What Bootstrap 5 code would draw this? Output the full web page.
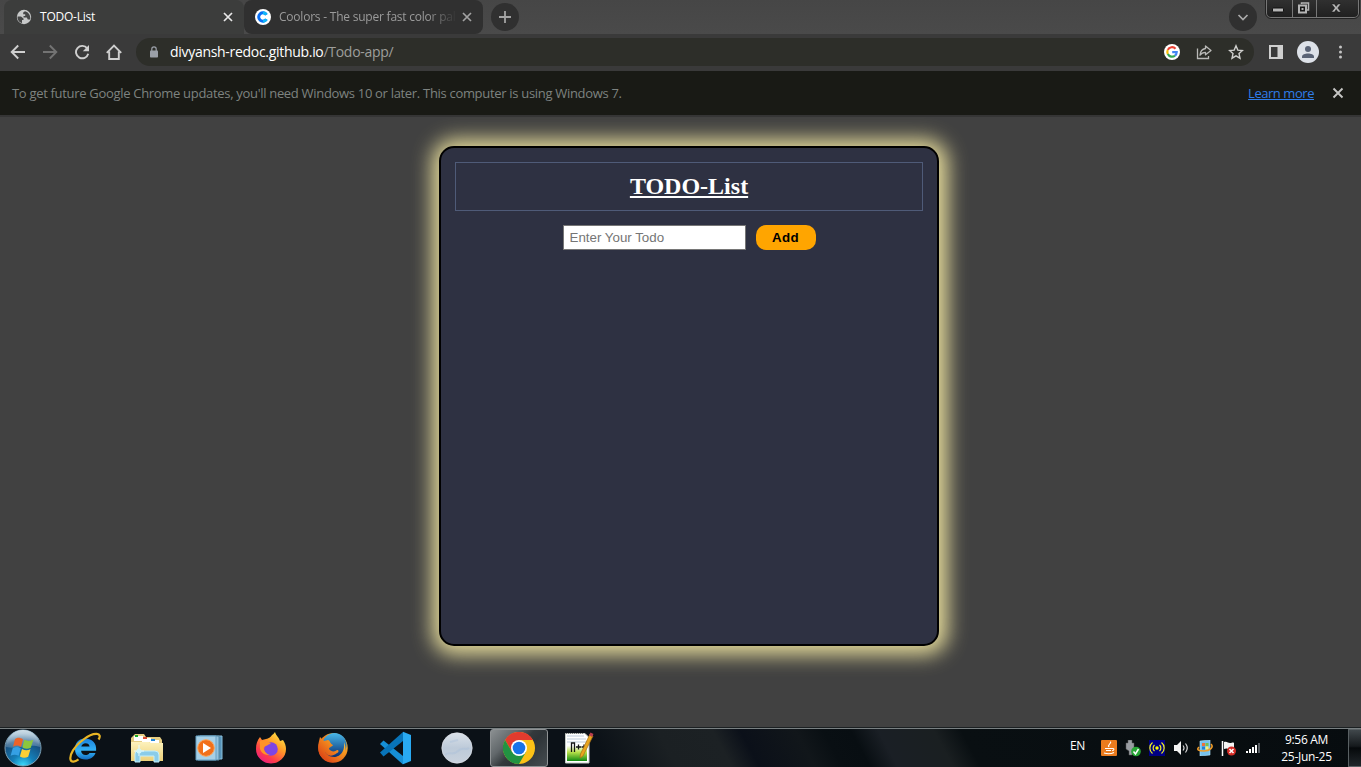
<!DOCTYPE html>
<html lang="en">
<head>
<meta charset="utf-8">
<title>TODO-List</title>
<link href="https://cdn.jsdelivr.net/npm/bootstrap@5.3.0/dist/css/bootstrap.min.css" rel="stylesheet">
<style>
body{width:1361px;height:767px;overflow:hidden;background:#414141;font-family:"Open Sans","Noto Sans",sans-serif;font-size:12px;line-height:16px}
svg{display:block;flex:none}
.titlebar{height:34px;background:linear-gradient(#464646,#4a4a4a);padding-left:4px}
.tab{width:240px;height:34px;border-radius:8px 8px 0 0;padding:0 9px 0 12px;color:#fff}
.tab.current{background:#3c3d3c}
.tab.other{width:239px;background:#303030;color:#9b9b9b;border-radius:8px;padding-left:11px}
.tab-title{flex:1;margin-left:8px;white-space:nowrap;letter-spacing:-.22px}
.other .tab-title{-webkit-mask-image:linear-gradient(90deg,#000 148px,transparent 178px);letter-spacing:-.22px}
.round-btn{width:28px;height:28px;margin-top:3px;background:#303030}
.winbtns{width:93px;height:18px;margin:0 2px 0 9px;border:1px solid #777;border-top:0;border-radius:0 0 5px 5px;background:linear-gradient(#303030,#202020);outline:1px solid #222}
.winbtns>div{width:24px;height:100%;border-left:1px solid #777}
.winbtns>div:first-child{width:25px;border:0}
.winbtns>div:last-child{width:42px}
.toolbar{height:37px;background:#3a3a3a;padding:0 0 1px 2px}
.slot{width:32px;flex:none;display:flex;justify-content:center;align-items:center}
.omnibox{height:28px;margin-left:6px;margin-right:6px;width:1118px;background:#2d2e29;padding-left:2px;padding-right:2px;font-size:14px;color:#9d9e9b}
.omnibox .url{letter-spacing:-.3px}
.infobar{height:44px;background:#191a15;color:#7e8380;padding:0 16px 0 12px;font-size:13px}
.infobar .msg{letter-spacing:-.31px}
.infobar a{color:#2f7de9;letter-spacing:-.45px;margin-right:17px}
.viewport{height:613px;background:#414141;border-top:2px solid #353535;padding:29px 0 0 439px}
.todo{width:500px;height:500px;background:#2e3142;border:2px solid #000;border-radius:15px;padding:14px;box-shadow:1px 1px 20px 8px #e3d999}
.todo h1{height:49px;border:1px solid #4f5b78;margin:0 0 14px;color:#fff;font:bold 24px/47px "Liberation Serif",serif;text-decoration:underline;text-align:center}
.todo input{width:183px;height:25px;border:1px solid #767676;border-radius:0;padding:1px 5px 1px 6px;font:13.33px "Liberation Sans",sans-serif;background:#fff}
.todo input::placeholder{color:#757575;opacity:1}
.todo button{width:60px;height:25px;border:0;border-radius:10px;background:orange;font:bold 13.33px "Liberation Sans",sans-serif;letter-spacing:.4px;padding:0;color:#000}
.taskbar{height:39px;border-top:1px solid #798082;box-shadow:0 -1px #1b2022;position:relative;background:linear-gradient(62deg,#0b1117 0,#0b1117 44%,#1b2023 49%,#1c2124 53%,#0b1019 55%,#11161a 59%,#090f13 61%,#080e12 63%,#1a1f25 65%,#1a1f21 69%,#090f12 71%,#070c0f 100%)}
.task{width:62px;height:38px;flex:none;display:flex;align-items:center;justify-content:center}
.task.running{width:58px;margin:0 2px;border:1px solid #8e9294;border-radius:3px;background:linear-gradient(135deg,#8b9092 0,#62686b 30%,#33393c 48%,#2e3438 60%,#454c50 100%)}
.tray{color:#fff}
.tray .ic{width:24px;display:flex;justify-content:center}
.tray .lang{letter-spacing:-.4px;width:27px;margin-bottom:5px}
.clock{width:83px;text-align:center;line-height:17px;letter-spacing:-.3px}
.desk{width:13px;height:38px;border:1px solid #596063;border-right:0;background:linear-gradient(#40474b,#15191c 45%,#06090b 50%,#20262a)}
</style>
</head>
<body>
<svg width="0" height="0" class="position-absolute">
<defs>
<radialGradient id="orb" cx=".5" cy="1" r=".9"><stop offset="0" stop-color="#3ee0ff"/><stop offset=".35" stop-color="#147fb8"/><stop offset=".8" stop-color="#174c7c"/><stop offset="1" stop-color="#6c93b0"/></radialGradient>
<linearGradient id="gloss" x2="0" y2="1"><stop offset="0" stop-color="#e2edf3" stop-opacity=".85"/><stop offset="1" stop-color="#b4d0e2" stop-opacity=".25"/></linearGradient>
<linearGradient id="ie" x2="0" y2="1"><stop offset="0" stop-color="#1b81dc"/><stop offset=".6" stop-color="#35b4f6"/><stop offset="1" stop-color="#126bc0"/></linearGradient>
<linearGradient id="fold" x2="0" y2="1"><stop offset="0" stop-color="#fdf2bd"/><stop offset="1" stop-color="#ecd079"/></linearGradient>
<linearGradient id="fx" x1=".9" y1="0" x2=".2" y2="1"><stop offset="0" stop-color="#fff44f"/><stop offset=".4" stop-color="#ff9d26"/><stop offset=".75" stop-color="#ff3c4a"/><stop offset="1" stop-color="#e81889"/></linearGradient>
<linearGradient id="globe" x2="0" y2="1"><stop offset="0" stop-color="#49b8e9"/><stop offset="1" stop-color="#082d72"/></linearGradient>
<linearGradient id="fx2" x1="1" y1="0" x2=".2" y2=".8"><stop offset="0" stop-color="#ffe96a"/><stop offset=".4" stop-color="#f69a20"/><stop offset="1" stop-color="#df4d17"/></linearGradient>
<linearGradient id="moon" x2="0" y2="1"><stop offset="0" stop-color="#dae1e9"/><stop offset=".5" stop-color="#bdcad9"/><stop offset="1" stop-color="#c9d2dd"/></linearGradient>
<linearGradient id="npp" x2="0" y2="1"><stop offset=".3" stop-color="#fff"/><stop offset=".6" stop-color="#b9e24a"/><stop offset="1" stop-color="#128a12"/></linearGradient>
</defs>
</svg>

<header>
 <div class="titlebar d-flex">
  <div class="tab current d-flex align-items-center">
   <svg width="16" height="16" viewBox="0 0 16 16"><circle cx="8" cy="8" r="7.200" fill="#c7c9c9"/><path d="M1.500 7.500h3.500l2.500 2v1.500H6v3C3.500 13.500 1.300 11 1.500 7.500zM9 2.200L7.200 3.500v1.800h2V7H7.500v1.500h3.300l1 2h2.400C15 6.500 12.500 3 9 2.200z" fill="#454646"/></svg>
   <span class="tab-title">TODO-List</span>
   <svg width="14" height="14" viewBox="0 0 14 14"><path d="M3 3l8 8M11 3l-8 8" stroke="#e8e8e8" stroke-width="1.700"/></svg>
  </div>
  <div class="tab other d-flex align-items-center">
   <svg width="16" height="16" viewBox="0 0 16 16"><circle cx="8" cy="8" r="8" fill="#fff"/><path d="M11.400 5.700A4.200 4.200 0 1 0 11.400 10.300" fill="none" stroke="#0a70f5" stroke-width="3"/><path d="M8 3.800a4.200 4.200 0 0 1 3.400 1.900M8 12.200a4.200 4.200 0 0 0 3.400-1.900" fill="none" stroke="#10b8f8" stroke-width="3"/></svg>
   <span class="tab-title">Coolors - The super fast color pal</span>
   <svg width="14" height="14" viewBox="0 0 14 14"><path d="M3 3l8 8M11 3l-8 8" stroke="#a2a2a2" stroke-width="1.700"/></svg>
  </div>
  <div class="round-btn rounded-circle ms-2 p-2"><svg width="12" height="12" viewBox="0 0 12 12"><path d="M6 0v12M0 6h12" stroke="#a3a3a3" stroke-width="1.800"/></svg></div>
  <div class="round-btn rounded-circle ms-auto p-2"><svg width="12" height="12" viewBox="0 0 12 12"><path d="M1.500 4L6 8.500 10.500 4" fill="none" stroke="#aaa" stroke-width="1.700"/></svg></div>
  <div class="winbtns d-flex">
   <div><svg width="24" height="17"><rect x="5.500" y="8" width="11" height="4" rx="1" fill="#b5b5b5" stroke="#111"/></svg></div>
   <div><svg width="23" height="17"><path d="M8.500 4V3h7v7h-2" fill="none" stroke="#b5b5b5" stroke-width="1.500"/><rect x="6" y="5.500" width="7" height="7" fill="#191919" stroke="#b5b5b5" stroke-width="2"/><path d="M8.500 9h2" stroke="#b5b5b5" stroke-width="2"/></svg></div>
   <div><svg width="40" height="17"><path d="M14.500 4h3l1.700 2.400L21 4h3l-3.200 4 3.200 4h-3l-1.800-2.400-1.700 2.400h-3l3.200-4z" fill="#b5b5b5" stroke="#111" stroke-width=".5"/></svg></div>
  </div>
 </div>

 <div class="toolbar d-flex align-items-center">
  <span class="slot"><svg width="16" height="16" viewBox="0 0 16 16"><path d="M15 8H2M8.200 1.500L1.700 8l6.500 6.500" fill="none" stroke="#cfcfcf" stroke-width="1.900"/></svg></span>
  <span class="slot"><svg width="16" height="16" viewBox="0 0 16 16"><path d="M1 8h13M7.800 1.500L14.300 8l-6.500 6.500" fill="none" stroke="#737373" stroke-width="1.900"/></svg></span>
  <span class="slot"><svg width="16" height="16" viewBox="0 0 16 16"><path d="M13.200 4.400A6.200 6.200 0 1 0 14.200 9.700" fill="none" stroke="#cfcfcf" stroke-width="1.900"/><path d="M15 1v6.200H8.800z" fill="#cfcfcf"/></svg></span>
  <span class="slot"><svg width="16" height="16" viewBox="0 0 16 16"><path d="M.8 8.800L8 1.500l7.200 7.300M3.200 7.500V15h9.600V7.500" fill="none" stroke="#cfcfcf" stroke-width="1.900"/></svg></span>
  <div class="omnibox rounded-pill d-flex align-items-center">
   <span class="slot"><svg width="10" height="12" viewBox="0 0 10 12"><rect x="1" y="4.500" width="8" height="7" rx=".8" fill="#9ba0a8"/><path d="M2.800 5V3a2.200 2.200 0 0 1 4.400 0v2" fill="none" stroke="#9ba0a8" stroke-width="1.200"/></svg></span>
   <span class="url"><span class="text-white">divyansh-redoc.github.io</span>/Todo-app/</span>
   <span class="slot ms-auto"><svg width="16" height="16" viewBox="0 0 16 16"><circle cx="8" cy="8" r="8" fill="#fff"/><g fill="none" stroke-width="2.200"><path d="M11.500 4.700A4.700 4.700 0 0 0 3.800 5.900" stroke="#ea4335"/><path d="M3.800 5.900a4.700 4.700 0 0 0 0 4.200" stroke="#fbbc05"/><path d="M3.800 10.100a4.700 4.700 0 0 0 7.200 1.500" stroke="#34a853"/><path d="M11 11.600A4.700 4.700 0 0 0 12.700 8.200H8.200" stroke="#4285f4"/></g></svg></span>
   <span class="slot"><svg width="16" height="16" viewBox="0 0 16 16"><path d="M1.500 4.500v10h11V12" fill="none" stroke="#b9b9b7" stroke-width="1.300"/><path d="M9.500 2l5.500 4.500-5.500 4.300V8.300C7 8.300 5.300 9.200 4 11.200 4.300 7.500 6.200 5 9.500 4.500z" fill="none" stroke="#b9b9b7" stroke-width="1.300" stroke-linejoin="round"/></svg></span>
   <span class="slot"><svg width="16" height="16" viewBox="0 0 16 16"><path d="M8 1.800l1.800 4.300 4.700.4-3.500 3.100 1 4.600-4-2.400-4 2.400 1-4.600L1.500 6.500l4.700-.4z" fill="none" stroke="#cfcfcd" stroke-width="1.400"/></svg></span>
  </div>
  <span class="slot"><svg width="14" height="14" viewBox="0 0 14 14"><path d="M0 0h14v14H0zM2 2v10h6.500V2z" fill="#cfcfcf" fill-rule="evenodd"/></svg></span>
  <span class="slot"><svg width="22" height="22" viewBox="0 0 22 22"><circle cx="11" cy="11" r="11" fill="#dde1e8"/><circle cx="11" cy="8" r="3" fill="#596275"/><path d="M5 17v-1.300c0-4.200 12-4.200 12 0V17z" fill="#596275"/></svg></span>
  <span class="slot"><svg width="4" height="14" viewBox="0 0 4 14" fill="#c5c5c5"><circle cx="2.500" cy="2" r="1.500"/><circle cx="2.500" cy="7" r="1.500"/><circle cx="2.500" cy="12" r="1.500"/></svg></span>
 </div>

 <div class="infobar d-flex align-items-center">
  <span class="msg">To get future Google Chrome updates, you'll need Windows 10 or later. This computer is using Windows 7.</span>
  <a class="ms-auto" href="#">Learn more</a>
  <svg width="14" height="14" viewBox="0 0 14 14"><path d="M2.500 2.500l9 9M11.500 2.500l-9 9" stroke="#c6c6c4" stroke-width="1.900"/></svg>
 </div>
</header>

<main class="viewport">
 <div class="todo">
  <h1>TODO-List</h1>
  <div class="d-flex justify-content-center" style="gap:10px"><input type="text" placeholder="Enter Your Todo"><button>Add</button></div>
 </div>
</main>

<footer class="taskbar d-flex align-items-center">
 <div class="d-flex align-items-center ps-1" style="width:54px"><svg width="38" height="38" viewBox="0 0 38 38"><circle cx="19" cy="19" r="18" fill="url(#orb)" stroke="#7da0b4"/><path d="M2 18a17 17 0 0 1 34 0C25 14 14 21 2 18z" fill="url(#gloss)"/><path d="M11 10c3-2 5-1.500 8 .2l-2 7.800c-3-1.800-5-1.800-8-.3z" fill="#ed6328"/><path d="M20.300 10.800c3 1.500 6 1.500 9 0l-2.500 8c-3 1.500-5.500 1.200-8.400-.3z" fill="#8cc63e"/><path d="M8.800 19c3-1.500 5-1.500 8 .2l-2.200 7.600c-3-1.600-5-1.500-8 0z" fill="#35a0e4"/><path d="M18 20c3 1.500 5.500 1.600 8.500.2l-2.300 7.600c-3 1.500-5.400 1.300-8.300-.2z" fill="#fdcf35"/></svg></div>
 <div class="task"><svg width="32" height="34" viewBox="0 0 32 34"><path d="M16 7.500C9.500 7.500 6 12 6 18s4 10.500 10.500 10.500c5 0 8.500-2.500 10-6.500h-6c-.8 1.500-2 2-4 2-2.500 0-4.300-1.700-4.400-4.200h15C28 12.500 23.500 7.500 16 7.500zM12.300 15.500c.5-2 2-3.300 4.300-3.300s3.700 1.200 4 3.300z" fill="url(#ie)" fill-rule="evenodd"/><path d="M29.500 8.500C34 2 25.500 0 14.500 8.500 4.500 16 .5 24 1.500 28.500c.7 3 4.500 2.500 8-.2" fill="none" stroke="#e9b524" stroke-width="2.200"/></svg></div>
 <div class="task"><svg width="34" height="34" viewBox="0 0 34 34"><path d="M3 5l2-2h9l2 3h14l2 3v19H1V7z" fill="#e6cd83"/><path d="M4 5h9v5H4z" fill="#fff"/><path d="M5 4h3v2H5z" fill="#1bac27"/><path d="M12 7h9v4h-9z" fill="#fff"/><path d="M13 6h4v2h-4z" fill="#d94932"/><path d="M20 9h9v3h-9z" fill="#fff"/><path d="M21 8h4v2h-4z" fill="#2187dc"/><path d="M1 11h18l2 1h12v18H1z" fill="url(#fold)"/><path d="M5 31V23q0-3 3-3h17q4 0 4 4v7h-5v-6H10v6z" fill="#8acce9" stroke="#c2eefb"/><path d="M9 14v11M4 20h10" stroke="#e7fcff"/><circle cx="9" cy="20" r="2.500" fill="#cff5fc"/></svg></div>
 <div class="task"><svg width="28" height="28" viewBox="0 0 28 28"><path d="M5 2h22v23H5z" fill="#5793b9" stroke="#8ac0dd"/><path d="M3 2h21v24H3z" fill="#94c3df" stroke="#5689a5"/><path d="M1 2h20v24H1z" fill="#a7d0e7" stroke="#66a1c4"/><circle cx="11" cy="14" r="8.300" fill="#f2701a" stroke="#fba55a"/><path d="M8 9l8 5-8 5z" fill="#fff"/></svg></div>
 <div class="task"><svg width="32" height="32" viewBox="0 0 32 32"><path d="M17 3c2-1 2-2 3-3 1 4 4 5 5 9l3-1c2 3 3 6 3 9a15 14.500 0 0 1-30 0c0-5 1-8 4-12l2 3 4-1c3-1 4-1 6-4z" fill="url(#fx)"/><circle cx="16" cy="17" r="6.800" fill="#7e45e4"/><path d="M5 9c4-2 8 0 11 3-3 0-4 2-7 3-1 3 2 7 6 8-7 1-11-5-10-9z" fill="#ff9228"/></svg></div>
 <div class="task"><svg width="32" height="32" viewBox="0 0 32 32"><circle cx="16" cy="16" r="14.700" fill="url(#fx2)"/><circle cx="17.500" cy="13" r="12" fill="url(#globe)"/><path d="M3 5l4 4 4-1c2 0 2 4 5 5-1 2-4 2-4 4 2 3 6 3 8 1 2 0 2 2 0 3-6 5-11 2-12-1 1 5 6 7 11 5 5-2 9-6 8-15 3 7 2 14-4 18-8 5-18 1-21-7-2-7 0-11 1-16z" fill="url(#fx2)"/></svg></div>
 <div class="task"><svg width="34" height="34" viewBox="0 0 34 34"><path d="M5.500 9.500L25 25v8.500L2 13z" fill="#168fd6"/><path d="M5.500 25.500L25 10V1L2 21.500z" fill="#0874b9"/><path d="M25 .8L33 4v26l-8 3.300z" fill="#29aaf2"/></svg></div>
 <div class="task"><svg width="32" height="32" viewBox="0 0 32 32"><circle cx="16" cy="16" r="15.200" fill="url(#moon)" stroke="#dce0e6" stroke-width=".7"/><path d="M4 23c5-4 8 1 13-4s7 0 11-3M9 10l8-2" stroke="#a7bfd9" stroke-width="2" fill="none" opacity=".4"/></svg></div>
 <div class="task running"><svg width="32" height="32" viewBox="0 0 32 32"><circle cx="16" cy="16" r="16" fill="#fbc116"/><path d="M2.100 8A16 16 0 0 1 29.900 8H16L9.100 20z" fill="#e33b2e"/><path d="M2.100 8A16 16 0 0 0 16 32l6.900-12H9.100z" fill="#229342"/><circle cx="16" cy="16" r="8" fill="#fff"/><circle cx="16" cy="16" r="6.300" fill="#1a73e8"/></svg></div>
 <div class="task"><svg class="me-1" width="30" height="34" viewBox="0 0 30 34"><path d="M1.500 2.500H21l4 4V32h-23.500z" fill="#fff" stroke="#c2c9c3"/><path d="M3 8h20v22H3z" fill="url(#npp)"/><path d="M3 5h17M3 8h19M3 11h20" stroke="#bdcbd8"/><path d="M2 2.500h18" stroke="#777" stroke-dasharray="1 1"/><path d="M7.500 21v-9h3v9M12 16h5m-2.500-2.500v5M17.500 16h5m-2.500-2.500v5" stroke="#151515" stroke-width="1.300" fill="none"/><path d="M26 3l3 2-10 20-3 2 .5-4z" fill="#e9a51d" stroke="#a66e15" stroke-width=".7"/><path d="M26.500 1.500l3 1.500-1.500 3-3-2z" fill="#b93e4e"/></svg></div>

 <div class="tray d-flex align-items-center ms-auto">
  <span class="lang">EN</span>
  <span class="ic"><svg width="16" height="16" viewBox="0 0 16 16"><rect width="16" height="16" rx="1" fill="#eb7b1d"/><path d="M9.500 1.500c1.500 2-3.500 3-1.500 5.500M4 8.500h7M5 10.500h5M3 13c3 1 7 1 10-.5M11 8.500c3-.5 2 2 0 2.300" fill="none" stroke="#fff" stroke-width="1.100"/></svg></span>
  <span class="ic"><svg width="16" height="17" viewBox="0 0 16 17"><path d="M3 0h4v3h2v6l-2 2v4H4v-4L1 9V3h2z" fill="#999da2" stroke="#555" stroke-width=".5"/><circle cx="11" cy="11.500" r="4.800" fill="#27a735"/><path d="M8.500 11.500l2 2.500 3-5" fill="none" stroke="#fff" stroke-width="1.500"/></svg></span>
  <span class="ic"><svg width="16" height="16" viewBox="0 0 16 16"><rect width="16" height="16" fill="#000083"/><circle cx="8" cy="8" r="1.700" fill="#ff0"/><path d="M5.500 5a4 4 0 0 0 0 6M10.500 5a4 4 0 0 1 0 6M3.500 2.500a7 7 0 0 0 0 11M12.500 2.500a7 7 0 0 1 0 11" fill="none" stroke="#f2f21c" stroke-width="1.200"/></svg></span>
  <span class="ic"><svg width="16" height="16" viewBox="0 0 16 16"><path d="M1 5h3l4-4v14l-4-4H1z" fill="#f4f4f4"/><path d="M10 5.500q2 2.500 0 5M12.500 3.500q3.500 4.500 0 9" fill="none" stroke="#ddd" stroke-width="1.200"/></svg></span>
  <span class="ic"><svg width="16" height="16" viewBox="0 0 16 16"><path d="M3 1l10-1v15l-10 1z" fill="#76c2ee" stroke="#b5e7ff" stroke-width=".6"/><path d="M5 3h3v3H5z" fill="#ed713d"/><path d="M8.500 3h3v3h-3z" fill="#79c14e"/><path d="M5 6.500h3v3H5z" fill="#2680d1"/><path d="M8.500 6.500h3v3h-3z" fill="#fff36b"/><path d="M14 4c3 3-1 7-7 7-5 0-8-1-5-4" fill="none" stroke="#f09c28" stroke-width="1.600"/></svg></span>
  <span class="ic"><svg width="16" height="16" viewBox="0 0 16 16"><path d="M1.500 1v15" stroke="#fff" stroke-width="1.500"/><path d="M3 2c3-1 4 1 6 1s3-1 4 0v6c-3-1-3 1-6 0-2-1-3 0-4 0z" fill="#f5f5f5"/><circle cx="10.500" cy="11" r="4.500" fill="#d42b25"/><path d="M8.500 9l4 4M12.500 9l-4 4" stroke="#fff" stroke-width="1.500"/></svg></span>
  <span class="ic"><svg width="16" height="16" viewBox="0 0 16 16" fill="#fff"><path d="M1 11h2v2H1zM4 9h2v4H4zM7 7h2v6H7zM10 5h2v8h-2z"/><path d="M13 3h2v10h-2z" fill="#555b60"/></svg></span>
  <div class="clock">9:56 AM<br>25-Jun-25</div>
  <div class="desk"></div>
 </div>
</footer>
<script src="https://cdn.jsdelivr.net/npm/bootstrap@5.3.0/dist/js/bootstrap.bundle.min.js"></script>
</body>
</html>
